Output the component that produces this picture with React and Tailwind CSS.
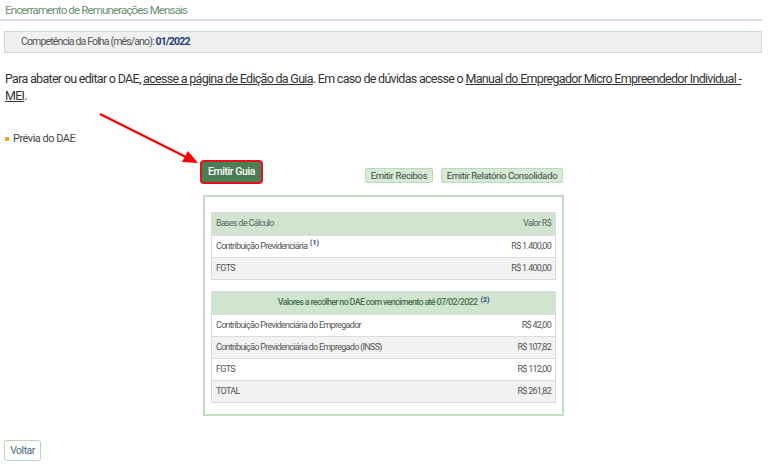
import React from 'react';

const font = { fontFamily: 'Roboto, "Liberation Sans", sans-serif' };

function Row({ label, value, shade, sup }) {
  return (
    <div className={`flex items-center justify-between h-[22px] px-[4px] border-t border-[#dcdcdc] ${shade ? 'bg-[#f2f2f2]' : 'bg-white'}`}>
      <span>
        {label}
        {sup && <sup className="ml-[3px] text-[7px] font-bold tracking-normal text-[#1f3f7a]">{sup}</sup>}
      </span>
      <span>{value}</span>
    </div>
  );
}

export default function App() {
  return (
    <div style={font} className="relative w-[768px] h-[467px] bg-white text-[#333] overflow-hidden">
      {/* Title */}
      <div className="pt-[2px] pl-[5px] h-[18px] text-[11.5px] leading-[16px] tracking-[-0.85px] text-[#6b8f73]">
        Encerramento de Remunerações Mensais
      </div>
      <div className="mt-[1px] w-[762px] h-[2px] bg-[#d8deec]" />

      {/* Competência */}
      <div className="mt-[10px] ml-[4px] w-[758px] h-[22px] flex items-center pl-[16px] bg-[#f0f0f0] border border-[#c9dec9] text-[10.5px] tracking-[-0.85px] text-[#555]">
        Competência da Folha (mês/ano):&nbsp;<b className="text-[#1f3f7a]">01/2022</b>
      </div>

      {/* Paragraph */}
      <p className="mt-[17px] pl-[5px] w-[756px] text-[12.5px] leading-[17px] tracking-[-0.7px] text-[#333]">
        Para abater ou editar o DAE, <span className="underline">acesse a página de Edição da Guia</span>. Em caso de dúvidas acesse o <span className="underline">Manual do Empregador Micro Empreendedor Individual - MEI</span>.
      </p>

      {/* Prévia */}
      <div className="mt-[27px] pl-[5px] flex items-center gap-[4px] h-[16px] text-[11px] tracking-[-0.5px] text-[#444]">
        <span className="w-[4px] h-[4px] bg-[#f5a623]" />
        Prévia do DAE
      </div>

      {/* Buttons + panel */}
      <div className="mt-[13px] ml-[200px] w-[363px]">
        <div className="flex items-end justify-between">
          <button className="h-[24px] w-[63px] rounded-[4px] border-2 border-[#e5141b] bg-[#4c7d54] text-white text-[10.5px] font-medium tracking-[-0.4px]">
            Emitir Guia
          </button>
          <div className="flex gap-[8px] mb-[1px]">
            <button className="h-[15px] w-[68px] rounded-[2px] border border-[#bcd8bc] bg-[#d6ebd6] text-[9.5px] leading-[13px] tracking-[-0.3px] text-[#444]">
              Emitir Recibos
            </button>
            <button className="h-[15px] w-[122px] rounded-[2px] border border-[#bcd8bc] bg-[#d6ebd6] text-[9.5px] leading-[13px] tracking-[-0.35px] text-[#444]">
              Emitir Relatório Consolidado
            </button>
          </div>
        </div>

        <div className="mt-[11px] ml-[3px] w-[361px] h-[221px] border-2 border-[#c3dcc3] pt-[15px] px-[6px] text-[9px] tracking-[-0.7px] text-[#555]">
          <div className="border border-[#dcdcdc]">
            <div className="flex items-center justify-between h-[22px] px-[4px] bg-[#cfe5cf] text-[#566]">
              <span>Bases de Cálculo</span>
              <span>Valor R$</span>
            </div>
            <Row label="Contribuição Previdenciária" sup="(1)" value="R$ 1.400,00" />
            <Row label="FGTS" value="R$ 1.400,00" shade />
          </div>

          <div className="mt-[11px] border border-[#dcdcdc]">
            <div className="flex items-center justify-center h-[22px] px-[4px] bg-[#cfe5cf] text-[#4b7050] font-medium">
              Valores a recolher no DAE com vencimento até 07/02/2022
              <sup className="ml-[3px] text-[7px] font-bold tracking-normal text-[#1f3f7a]">(2)</sup>
            </div>
            <Row label="Contribuição Previdenciária do Empregador" value="R$ 42,00" />
            <Row label="Contribuição Previdenciária do Empregado (INSS)" value="R$ 107,82" shade />
            <Row label="FGTS" value="R$ 112,00" />
            <Row label="TOTAL" value="R$ 261,82" shade />
          </div>
        </div>
      </div>

      {/* Voltar */}
      <button className="absolute left-[4px] top-[440px] h-[21px] w-[37px] rounded-[3px] border border-[#b9d5b9] bg-white text-[10.5px] tracking-[-0.5px] text-[#4a6a78]">
        Voltar
      </button>

      {/* Red arrow annotation */}
      <svg className="absolute left-0 top-0 pointer-events-none" width="768" height="467">
        <line x1="100" y1="114" x2="186" y2="157" stroke="#f00" strokeWidth="2.5" />
        <polygon points="198,163 182,162 188,151" fill="#f00" />
      </svg>
    </div>
  );
}
